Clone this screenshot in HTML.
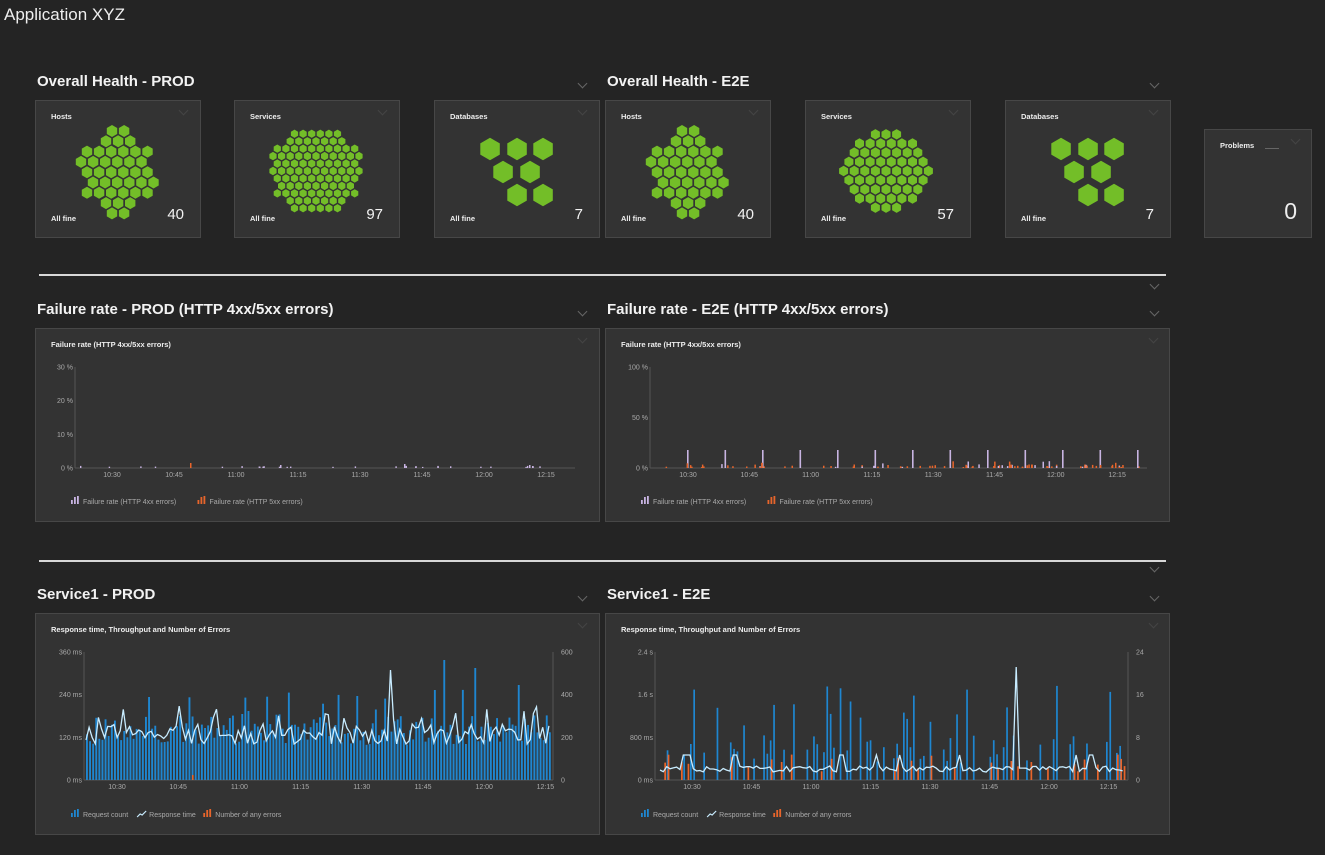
<!DOCTYPE html>
<html><head><meta charset="utf-8">
<style>
body{margin:0;background:#242424;width:1325px;height:855px;overflow:hidden;position:relative;font-family:"Liberation Sans",sans-serif;color:#fff}
.a{position:absolute}
.t{position:absolute;font-weight:bold;font-size:15px;color:#f2f2f2;white-space:nowrap}
.tile{position:absolute;background:#333;border:1px solid #474747;box-sizing:border-box}
.lbl{position:absolute;font-size:7.5px;font-weight:bold;color:#eee}
.num{position:absolute;font-size:15px;color:#f2f2f2}
.hr{position:absolute;left:39px;width:1127px;height:2px;background:#d8d8d8}
.chev{position:absolute;width:6px;height:6px;border-right:1px solid #666;border-bottom:1px solid #666;transform:rotate(45deg)}
svg{position:absolute;left:0;top:0}
</style></head><body>
<div class="a" style="left:4px;top:5px;font-size:17px;color:#eee">Application XYZ</div>

<div class="t" style="left:37px;top:73px">Overall Health - PROD</div>
<div class="t" style="left:607px;top:73px">Overall Health - E2E</div>
<div class="t" style="left:37px;top:301px">Failure rate - PROD (HTTP 4xx/5xx errors)</div>
<div class="t" style="left:607px;top:301px">Failure rate - E2E (HTTP 4xx/5xx errors)</div>
<div class="t" style="left:37px;top:586px">Service1 - PROD</div>
<div class="t" style="left:607px;top:586px">Service1 - E2E</div>

<div class="hr" style="top:274px"></div>
<div class="hr" style="top:560px"></div>

<div class="tile" style="left:35px;top:100px;width:166px;height:138px"><div class="lbl" style="left:15px;top:11px">Hosts</div><div class="lbl" style="left:15px;top:113px">All fine</div><div class="num" style="right:16px;top:105px">40</div></div>
<div class="tile" style="left:234px;top:100px;width:166px;height:138px"><div class="lbl" style="left:15px;top:11px">Services</div><div class="lbl" style="left:15px;top:113px">All fine</div><div class="num" style="right:16px;top:105px">97</div></div>
<div class="tile" style="left:434px;top:100px;width:166px;height:138px"><div class="lbl" style="left:15px;top:11px">Databases</div><div class="lbl" style="left:15px;top:113px">All fine</div><div class="num" style="right:16px;top:105px">7</div></div>
<div class="tile" style="left:605px;top:100px;width:166px;height:138px"><div class="lbl" style="left:15px;top:11px">Hosts</div><div class="lbl" style="left:15px;top:113px">All fine</div><div class="num" style="right:16px;top:105px">40</div></div>
<div class="tile" style="left:805px;top:100px;width:166px;height:138px"><div class="lbl" style="left:15px;top:11px">Services</div><div class="lbl" style="left:15px;top:113px">All fine</div><div class="num" style="right:16px;top:105px">57</div></div>
<div class="tile" style="left:1005px;top:100px;width:166px;height:138px"><div class="lbl" style="left:15px;top:11px">Databases</div><div class="lbl" style="left:15px;top:113px">All fine</div><div class="num" style="right:16px;top:105px">7</div></div>
<div class="tile" style="left:1204px;top:129px;width:108px;height:109px"><div class="lbl" style="left:15px;top:11px">Problems</div><div class="a" style="left:60px;top:18px;width:14px;height:1px;background:#666"></div><div class="a" style="right:14px;top:68px;font-size:23px;color:#eee">0</div></div>

<div class="tile" style="left:35px;top:328px;width:565px;height:194px"><div class="lbl" style="left:15px;top:11px">Failure rate (HTTP 4xx/5xx errors)</div></div>
<div class="tile" style="left:605px;top:328px;width:565px;height:194px"><div class="lbl" style="left:15px;top:11px">Failure rate (HTTP 4xx/5xx errors)</div></div>
<div class="tile" style="left:35px;top:613px;width:565px;height:222px"><div class="lbl" style="left:15px;top:11px">Response time, Throughput and Number of Errors</div></div>
<div class="tile" style="left:605px;top:613px;width:565px;height:222px"><div class="lbl" style="left:15px;top:11px">Response time, Throughput and Number of Errors</div></div>

<div class="chev" style="left:579px;top:80px"></div><div class="chev" style="left:1151px;top:80px"></div>
<div class="chev" style="left:1151px;top:281px"></div>
<div class="chev" style="left:579px;top:308px"></div><div class="chev" style="left:1151px;top:308px"></div>
<div class="chev" style="left:1151px;top:564px"></div>
<div class="chev" style="left:579px;top:593px"></div><div class="chev" style="left:1151px;top:593px"></div>
<div class="chev" style="left:180px;top:107px;border-color:#444"></div><div class="chev" style="left:379px;top:107px;border-color:#444"></div><div class="chev" style="left:579px;top:107px;border-color:#444"></div><div class="chev" style="left:750px;top:107px;border-color:#444"></div><div class="chev" style="left:950px;top:107px;border-color:#444"></div><div class="chev" style="left:1150px;top:107px;border-color:#444"></div><div class="chev" style="left:1292px;top:136px;border-color:#444"></div>
<div class="chev" style="left:579px;top:335px;border-color:#444"></div><div class="chev" style="left:1150px;top:335px;border-color:#444"></div><div class="chev" style="left:579px;top:620px;border-color:#444"></div><div class="chev" style="left:1150px;top:620px;border-color:#444"></div>

<svg id="s" width="1325" height="855" font-family="Liberation Sans, sans-serif"></svg>
<script>
var S=document.getElementById('s'),out='';
var seed=7;function r(){seed=(seed*16807)%2147483647;return (seed-1)/2147483646;}
function hex(cx,cy,w,c){var h=w/Math.sqrt(3);var p=[];for(var i=0;i<6;i++){var a=Math.PI/3*i+Math.PI/6;p.push((cx+h*Math.cos(a)).toFixed(1)+','+(cy+h*Math.sin(a)).toFixed(1));}out+='<polygon points="'+p.join(' ')+'" fill="'+(c||'#73be28')+'"/>';}
function hosts(ox){var rows=[[112,2],[106,3],[87,6],[81,6],[87,6],[93,6],[87,6],[106,3],[112,2]];
for(var i=0;i<rows.length;i++){for(var j=0;j<rows[i][1];j++)hex(ox-35+rows[i][0]+j*12.1,131+i*10.3,10.4);}}
hosts(35);hosts(605);
function cluster(cx,cy,n,sp,w){var pts=[];for(var i=-12;i<=12;i++)for(var j=-12;j<=12;j++){var x=cx+j*sp+(i%2?sp/2:0),y=cy+i*sp*0.866;pts.push([x,y,(x-cx)*(x-cx)+(y-cy)*(y-cy)*1.05]);}
pts.sort(function(a,b){return a[2]-b[2]});for(var k=0;k<n;k++)hex(pts[k][0],pts[k][1],w);}
cluster(316,171,97,8.6,7.2);cluster(886,171,57,10.6,9);
function db(ox){[[56,149],[83,149],[109,149],[69,172],[96,172],[83,195],[109,195]].forEach(function(p){hex(ox+p[0],p[1],19.5);});}
db(434);db(1005);
function txt(x,y,s,anc){out+='<text x="'+x+'" y="'+y+'" font-size="7" fill="#aaa" text-anchor="'+(anc||'middle')+'">'+s+'</text>';}
var times=['10:30','10:45','11:00','11:15','11:30','11:45','12:00','12:15'];
function axes(x0,x1,y0,y1,ylab,rlab,t0,tsp){
out+='<line x1="'+x0+'" y1="'+y0+'" x2="'+x0+'" y2="'+y1+'" stroke="#555"/><line x1="'+x0+'" y1="'+y1+'" x2="'+x1+'" y2="'+y1+'" stroke="#555"/>';
for(var i=0;i<ylab.length;i++){var y=y1-(y1-y0)*i/(ylab.length-1);txt(x0-2,y+2.5,ylab[i],'end');if(rlab){txt(x1+8,y+2.5,rlab[i],'start');}}
if(rlab)out+='<line x1="'+x1+'" y1="'+y0+'" x2="'+x1+'" y2="'+y1+'" stroke="#555"/>';
for(var k=0;k<8;k++)txt(t0+tsp*k,y1+9,times[k]);}
function bar(x,y1,h,c,w){out+='<rect x="'+x.toFixed(1)+'" y="'+(y1-h).toFixed(1)+'" width="'+(w||1.6)+'" height="'+h.toFixed(1)+'" fill="'+c+'"/>';}
function legend(x,y,items){items.forEach(function(it){var c=it[1];
if(it[2]=='l')out+='<polyline points="'+x+','+(y+3)+' '+(x+3)+','+y+' '+(x+5)+','+(y+1)+' '+(x+9)+','+(y-3)+'" fill="none" stroke="'+c+'" stroke-width="1.2"/>';
else{bar(x,y+3,4,c,1.8);bar(x+3,y+3,7,c,1.8);bar(x+6,y+3,8,c,1.8);}
txt(x+12,y+3,it[0],'start');x+=12+it[0].length*3.55+8;});}
// Failure PROD
axes(75,575,367,468,['0 %','10 %','20 %','30 %'],null,112,62);
for(var i=0;i<30;i++){var x=80+r()*490;bar(x,468,1+r()*1.2,'#c8b4e2',1.4);}
bar(190,468,5,'#e8652b',1.5);bar(280,468,3,'#c8b4e2',1.5);bar(404,468,4,'#c8b4e2',1.5);bar(529,468,3,'#c8b4e2',1.5);
legend(71,501,[['Failure rate (HTTP 4xx errors)','#c8b4e2'],['Failure rate (HTTP 5xx errors)','#e8652b']]);
// Failure E2E
axes(650,1147,367,468,['0 %','50 %','100 %'],null,688,61.3);
for(var k=0;k<13;k++){var bx=687+k*37.5;bar(bx,468,18,'#c8b4e2',1.6);}
for(var i=0;i<90;i++){var x=665+r()*475;bar(x,468,1+r()*(r()<0.3?6:2.5),r()<0.75?'#e8652b':'#c8b4e2',1.5);}
legend(641,501,[['Failure rate (HTTP 4xx errors)','#c8b4e2'],['Failure rate (HTTP 5xx errors)','#e8652b']]);
// Service PROD
axes(84,553,652,780,['0 ms','120 ms','240 ms','360 ms'],['0','200','400','600'],117,61.2);
var n=150,pts=[];for(var i=0;i<n;i++){var x=86+i*(466/n);var h=35+r()*30+(r()<0.2?r()*30:0);if(i==112)h=90;if(i==115)h=120;if(i==125)h=112;if(i==139)h=95;if(i==20)h=83;bar(x,780,h,'#1f86d0',1.9);
var v=36+r()*20;if(r()<0.1)v+=18;if(i==98)v=110;if(i==99)v=60;pts.push(x.toFixed(1)+','+(780-v).toFixed(1));}
bar(192,780,5,'#e8652b',1.6);
out+='<polyline points="'+pts.join(' ')+'" fill="none" stroke="#c8ecff" stroke-width="1.3"/>';
legend(71,814,[['Request count','#1f86d0'],['Response time','#c8ecff','l'],['Number of any errors','#e8652b']]);
// Service E2E
axes(655,1128,652,780,['0 ms','800 ms','1.6 s','2.4 s'],['0','8','16','24'],692,59.5);
pts=[];n=140;for(var i=0;i<n;i++){var x=660+i*(466/n);var q=r();if(q<0.45){var h=r()<0.3?50+r()*45:15+r()*30;bar(x,780,h,'#1f86d0',1.7);}
if(r()<0.25)bar(x+1,780,8+r()*18,'#e8652b',1.7);
var v=8+r()*6;if(r()<0.06)v=25;if(i==107)v=113;pts.push(x.toFixed(1)+','+(780-v).toFixed(1));}
out+='<polyline points="'+pts.join(' ')+'" fill="none" stroke="#c8ecff" stroke-width="1.3"/>';
legend(641,814,[['Request count','#1f86d0'],['Response time','#c8ecff','l'],['Number of any errors','#e8652b']]);
S.innerHTML=out;
</script>
</body></html>
